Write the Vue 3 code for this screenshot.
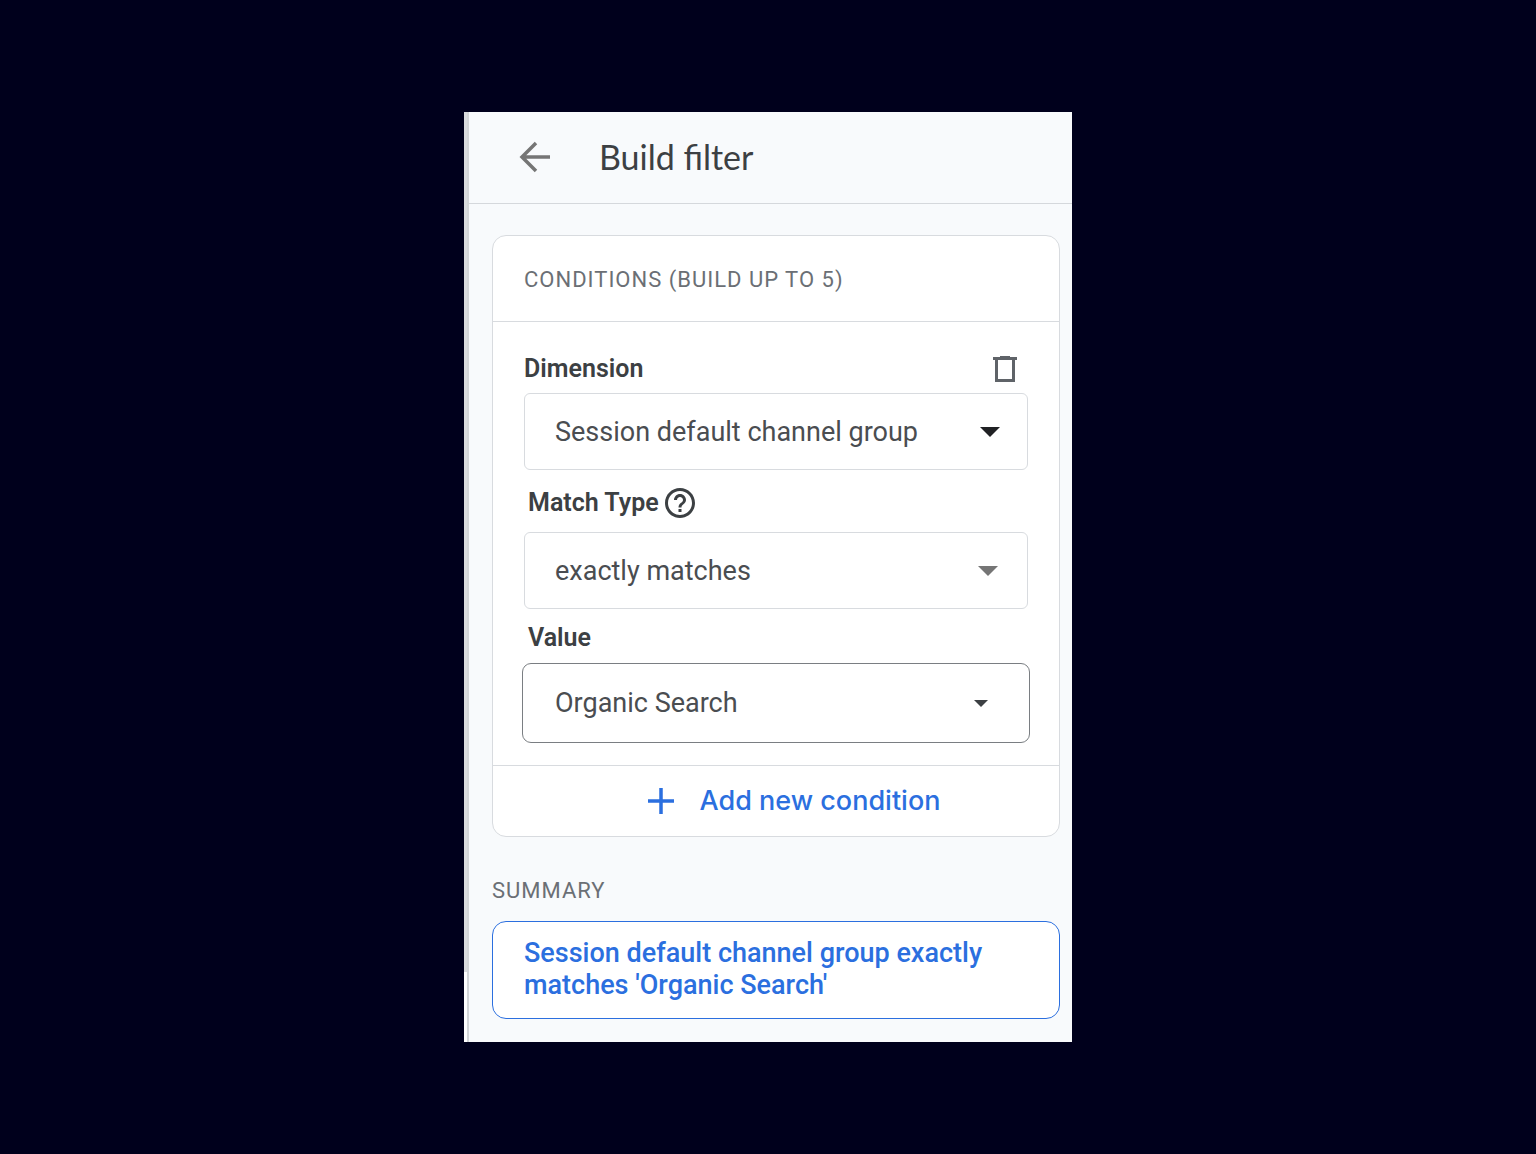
<script setup>
import { ref } from 'vue'

const fields = ref([
  { id: 'dimension', label: 'Dimension', value: 'Session default channel group', removable: true },
  { id: 'match', label: 'Match Type', value: 'exactly matches', help: true },
  { id: 'value', label: 'Value', value: 'Organic Search' },
])
</script>

<template>
  <main class="stage">
    <div class="frame">
      <div class="scroll-edge"><div class="thumb"></div></div>
      <section class="panel">
        <header class="top">
          <button class="icon-button" type="button" aria-label="Back">
            <svg width="32" height="32" viewBox="0 0 32 32" fill="none" stroke="#757575" stroke-width="3.500">
              <path d="M31 16H3M17 2L3 16l14 14" />
            </svg>
          </button>
          <h1>Build filter</h1>
        </header>

        <div class="body">
          <div class="card">
            <h2 class="caption card-title">CONDITIONS (BUILD UP TO 5)</h2>
            <div class="fields">
              <div v-for="field in fields" :key="field.id" class="field" :class="field.id">
                <div class="label-row">
                  <label :for="field.id">{{ field.label }}</label>
                  <button v-if="field.removable" class="icon-button trash" type="button" aria-label="Delete condition">
                    <svg width="24" height="28" viewBox="0 0 24 28">
                      <path fill="#5f6368" fill-rule="evenodd" d="M7 1h10v1h7v3h-2v22H2V5H0V2h7zM5 5v19h14V5z" />
                    </svg>
                  </button>
                  <button v-if="field.help" class="icon-button" type="button" aria-label="About match types">
                    <svg width="30" height="30" viewBox="2 2 20 20" fill="#3c4043">
                      <path d="M11 18h2v-2h-2v2zm1-16C6.480 2 2 6.480 2 12s4.480 10 10 10 10-4.480 10-10S17.520 2 12 2zm0 18c-4.410 0-8-3.590-8-8s3.590-8 8-8 8 3.590 8 8-3.590 8-8 8zm0-14c-2.210 0-4 1.790-4 4h2c0-1.100.9-2 2-2s2 .9 2 2c0 2-3 1.750-3 5h2c0-2.250 3-2.500 3-5 0-2.210-1.790-4-4-4z" />
                    </svg>
                  </button>
                </div>
                <div class="control">
                  <select :id="field.id" v-model="field.value">
                    <option>{{ field.value }}</option>
                  </select>
                  <svg class="arrow" viewBox="0 0 20 10" aria-hidden="true"><path d="M0 0h20L10 10z" fill="currentColor" /></svg>
                </div>
              </div>
            </div>
            <button class="add" type="button">
              <svg width="26" height="26" viewBox="0 0 26 26" stroke="#2b6fdf" stroke-width="3.500">
                <path d="M13 0v26M0 13h26" />
              </svg>
              <span>Add new condition</span>
            </button>
          </div>

          <h2 class="caption summary-title">SUMMARY</h2>
          <p class="summary">Session default channel group exactly matches 'Organic Search'</p>
        </div>
      </section>
    </div>
  </main>
</template>

<style>
body {
  margin: 0;
  background: #00001c;
}
</style>

<style scoped>
* {
  box-sizing: border-box;
}
.stage {
  min-height: 100vh;
  display: flex;
  align-items: center;
  justify-content: center;
  font-family: Roboto, "Liberation Sans", sans-serif;
}
.frame {
  display: flex;
  width: 100%;
  max-width: 608px;
  background: #f8fafc;
}
.scroll-edge {
  width: 5px;
  flex: none;
  background: #fff;
  border-right: 2px solid #d3d6d8;
}
.thumb {
  height: 860px;
  background: #dadcde;
}
.panel {
  flex: 1;
  min-width: 0;
}
h1, h2, p {
  margin: 0;
}
button {
  border: 0;
  background: none;
  padding: 0;
  cursor: pointer;
}
svg {
  display: block;
}
.top {
  display: flex;
  align-items: center;
  gap: 48px;
  height: 92px;
  padding: 0 50px 2px;
  border-bottom: 1px solid #d5d8dc;
}
h1 {
  font: 400 34px/44px Lato, sans-serif;
  color: #3c4043;
}
.body {
  padding: 31px 12px 23px 23px;
}
.card {
  background: #fff;
  border: 1px solid #d8dbdf;
  border-radius: 14px;
}
.caption {
  font-size: 22px;
  font-weight: 400;
  line-height: 28px;
  letter-spacing: 1px;
  color: #6b6f75;
}
.card-title {
  padding: 30px 31px 27px;
  border-bottom: 1px solid #d8dbdf;
}
.fields {
  padding: 28px 29px 22px;
}
.label-row {
  display: flex;
  align-items: center;
  gap: 6px;
  padding: 0 6px;
}
label {
  font-size: 25px;
  font-weight: 600;
  line-height: 32px;
  color: #3c4043;
}
.control {
  display: grid;
  align-items: center;
  margin: 0 2px;
}
select {
  grid-area: 1 / 1;
  width: 100%;
  height: 77px;
  padding: 0 60px 0 30px;
  appearance: none;
  background: #fff;
  border: 1px solid #d8dbdf;
  border-radius: 6px;
  font: 400 27px/36px Roboto, "Liberation Sans", sans-serif;
  color: #4a4d51;
}
.arrow {
  grid-area: 1 / 1;
  justify-self: end;
  width: 20px;
  height: 10px;
  margin-right: 28px;
  color: #202124;
  pointer-events: none;
}
.dimension .label-row {
  height: 43px;
  padding: 0 13px 6px 2px;
}
.trash {
  margin-left: auto;
}
.match .label-row {
  height: 62px;
  padding-top: 4px;
}
.match .arrow {
  color: #757575;
  margin-right: 30px;
}
.value .label-row {
  height: 54px;
  padding-top: 4px;
}
.value .control {
  margin: 0;
}
.value select {
  height: 80px;
  padding-left: 32px;
  border-color: #7a7e82;
  border-radius: 9px;
}
.value .arrow {
  width: 14px;
  height: 7px;
  margin-right: 42px;
  color: #3c4043;
}
.add {
  display: flex;
  align-items: center;
  justify-content: center;
  gap: 26px;
  width: 100%;
  height: 71px;
  padding-left: 36px;
  border-top: 1px solid #d8dbdf;
  font: 500 27px/36px Inter, sans-serif;
  color: #2b6fdf;
}
.summary-title {
  padding: 40px 0 16px;
}
.summary {
  padding: 15px 31px 17px;
  background: #fff;
  border: 1px solid #2b6fdf;
  border-radius: 14px;
  font-size: 27px;
  font-weight: 500;
  line-height: 32px;
  color: #2b6fdf;
}
</style>
